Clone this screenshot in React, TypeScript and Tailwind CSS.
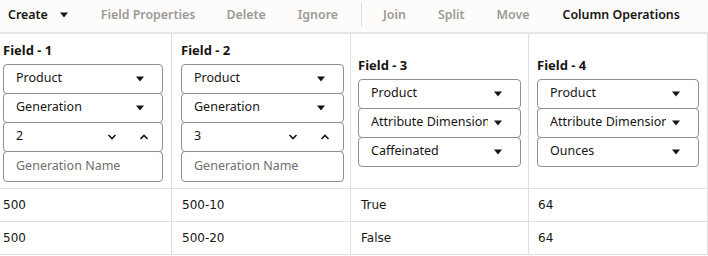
import React from "react"

const Caret = () => (
  <svg width="10" height="6" viewBox="0 0 10 6" className="shrink-0">
    <path d="M1 0.5h8L5 5.5z" fill="#161513" />
  </svg>
)

const Chevron = ({ up }: { up?: boolean }) => (
  <svg width="10" height="6" viewBox="0 0 10 6" className="shrink-0">
    <path d={up ? "M1.5 5L5 1.5L8.5 5" : "M1.5 1L5 4.5L8.5 1"} fill="none" stroke="#161513" strokeWidth="1.6" />
  </svg>
)

const Select = ({ value }: { value: string }) => (
  <div className="flex items-center h-[30px] border border-[#8f8f8f] rounded-[4px] pl-3 pr-[16px] bg-white -mt-px first:mt-0">
    <span className="flex-1 overflow-hidden whitespace-nowrap text-[12.5px] text-[#161513]">{value}</span>
    <span className="w-[12px] ml-1 flex justify-center"><Caret /></span>
  </div>
)

const Stepper = ({ value }: { value: string }) => (
  <div className="flex items-center h-[30px] border border-[#8f8f8f] rounded-[4px] pl-3 pr-[13px] bg-white -mt-px">
    <span className="flex-1 text-[12.5px] text-[#161513]">{value}</span>
    <Chevron />
    <span className="w-[22px]" />
    <Chevron up />
  </div>
)

const Input = ({ placeholder }: { placeholder: string }) => (
  <div className="flex items-center h-[31px] border border-[#8f8f8f] rounded-[4px] pl-3 bg-white -mt-px">
    <span className="text-[12.5px] text-[#6f6e6c]">{placeholder}</span>
  </div>
)

const fields = [
  { label: "Field - 1", gen: "2", pad: "pl-[3px] pr-[8px]" },
  { label: "Field - 2", gen: "3", pad: "pl-[9px] pr-[6px]" },
  { label: "Field - 3", sel: ["Product", "Attribute Dimension", "Caffeinated"], pad: "pl-[7px] pr-[7px]" },
  { label: "Field - 4", sel: ["Product", "Attribute Dimension", "Ounces"], pad: "pl-[8px] pr-[8px]" },
]

const rows = [
  ["500", "500-10", "True", "64"],
  ["500", "500-20", "False", "64"],
]

const cellPad = ["pl-[3px]", "pl-[10px]", "pl-[10px]", "pl-[9px]"]

export default function App() {
  return (
    <div className="w-[708px] h-[256px] bg-white overflow-hidden" style={{ fontFamily: "'Noto Sans', 'Open Sans', sans-serif" }}>
      <div className="flex items-center h-[34px] pb-[2px] border-b-2 border-[#e6e6e6] bg-[#fdfcfb] text-[12.4px] font-semibold">
        <div className="flex items-center pl-[8px] text-[#161513]">
          Create
          <span className="ml-[11px]"><Caret /></span>
        </div>
        <span className="ml-[32px] text-[#9c9a98]">Field Properties</span>
        <span className="ml-[31px] text-[#9c9a98]">Delete</span>
        <span className="ml-[32px] text-[#9c9a98]">Ignore</span>
        <span className="ml-[23px] w-px h-[24px] bg-[#dcdcdc]" />
        <span className="ml-[21px] text-[#9c9a98]">Join</span>
        <span className="ml-[32px] text-[#9c9a98]">Split</span>
        <span className="ml-[32px] text-[#9c9a98]">Move</span>
        <span className="ml-[33px] text-[#161513]">Column Operations</span>
      </div>
      <div className="grid grid-cols-[172px_179px_178px_179px]">
        {fields.map((f, i) => (
          <div key={i} className={`h-[155px] border-r border-b border-[#e0e0e0] flex flex-col justify-center ${f.pad}`}>
            <div className="text-[13px] font-bold text-[#161513] mb-[6px] leading-[18px]">{f.label}</div>
            {f.sel ? (
              f.sel.map((s, j) => <Select key={j} value={s} />)
            ) : (
              <>
                <Select value="Product" />
                <Select value="Generation" />
                <Stepper value={f.gen as string} />
                <Input placeholder="Generation Name" />
              </>
            )}
          </div>
        ))}
        {rows.map((r, ri) =>
          r.map((c, ci) => (
            <div key={`${ri}-${ci}`} className={`h-[33px] flex items-center border-r border-b border-[#e0e0e0] text-[12px] text-[#161513] ${cellPad[ci]}`} style={{ fontFamily: "'DejaVu Sans', Verdana, sans-serif" }}>
              {c}
            </div>
          ))
        )}
      </div>
    </div>
  )
}
